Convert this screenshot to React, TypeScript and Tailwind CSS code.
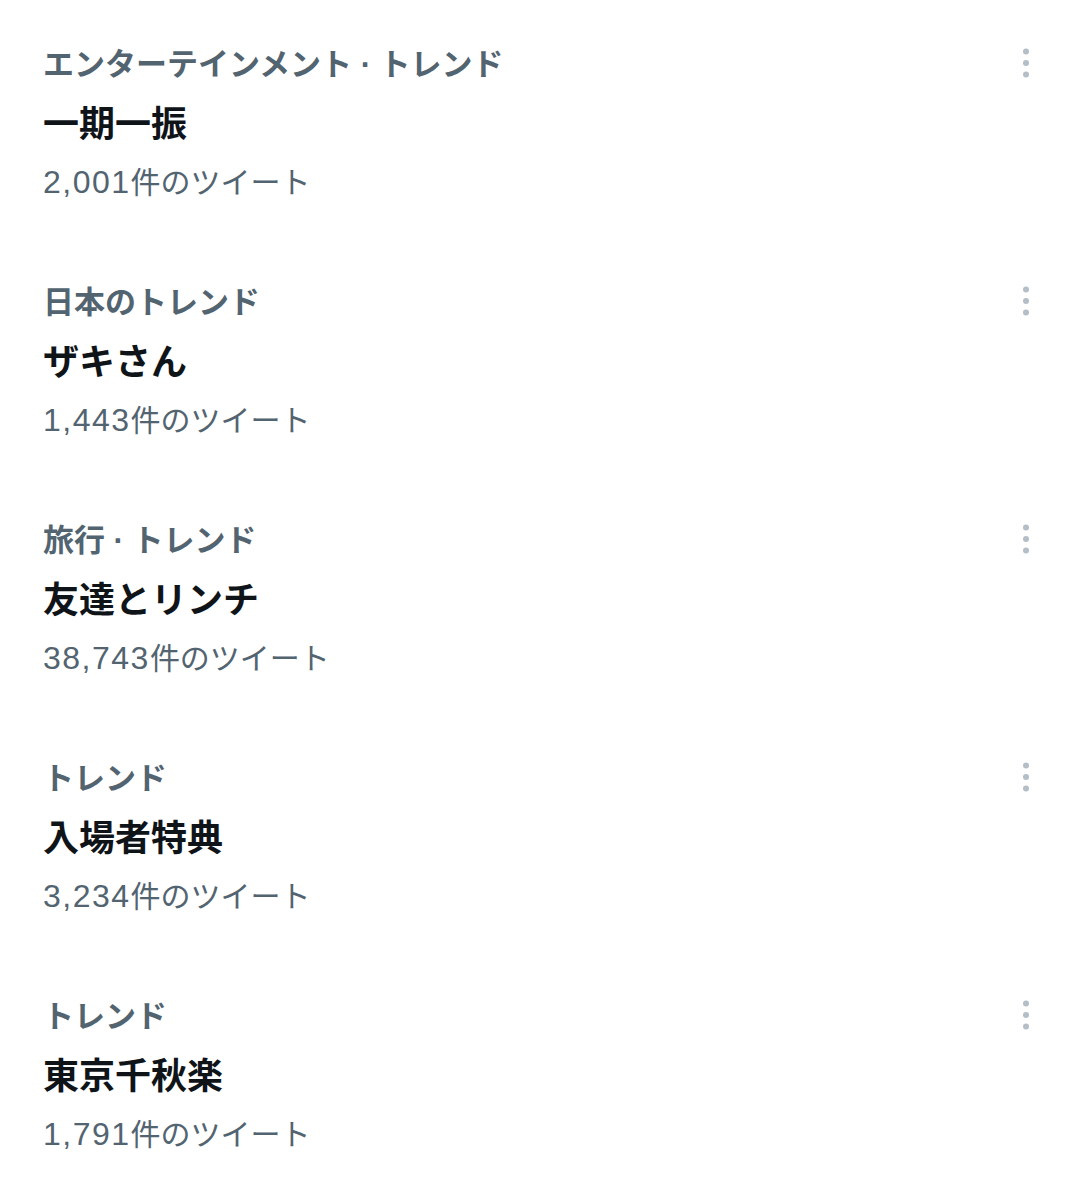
import React from 'react';

type Trend = { category: string; title: string; num: string };

const trends: Trend[] = [
  { category: 'エンターテインメント · トレンド', title: '一期一振', num: '2,001' },
  { category: '日本のトレンド', title: 'ザキさん', num: '1,443' },
  { category: '旅行 · トレンド', title: '友達とリンチ', num: '38,743' },
  { category: 'トレンド', title: '入場者特典', num: '3,234' },
  { category: 'トレンド', title: '東京千秋楽', num: '1,791' },
];

function MoreIcon() {
  return (
    <svg width="8" height="32" viewBox="0 0 8 32" className="text-[#b4bec6]" fill="currentColor">
      <circle cx="4" cy="4.5" r="3" />
      <circle cx="4" cy="16" r="3" />
      <circle cx="4" cy="27.5" r="3" />
    </svg>
  );
}

function TrendRow({ trend }: { trend: Trend }) {
  return (
    <div className="flex items-start justify-between pl-[43px] pr-[50px] pt-[45px] pb-[36px]">
      <div className="flex flex-col">
        <div className="h-[40px] leading-[40px] text-[31px] font-bold text-[#536471] whitespace-pre">
          {trend.category}
        </div>
        <div className="mt-[16px] h-[48px] leading-[48px] text-[36px] font-bold text-[#0f1419]">
          {trend.title}
        </div>
        <div className="mt-[13px] h-[40px] leading-[40px] text-[30px] text-[#536471]">
          <span className="text-[32px] tracking-[1.5px]">{trend.num}</span>件のツイート
        </div>
      </div>
      <div className="pt-[2px]">
        <MoreIcon />
      </div>
    </div>
  );
}

export default function App() {
  return (
    <div
      className="w-[1080px] min-h-[1198px] bg-white"
      style={{ fontFamily: '"Liberation Sans", "Noto Sans CJK JP", sans-serif' }}
    >
      {trends.map((t, i) => (
        <TrendRow key={i} trend={t} />
      ))}
    </div>
  );
}
